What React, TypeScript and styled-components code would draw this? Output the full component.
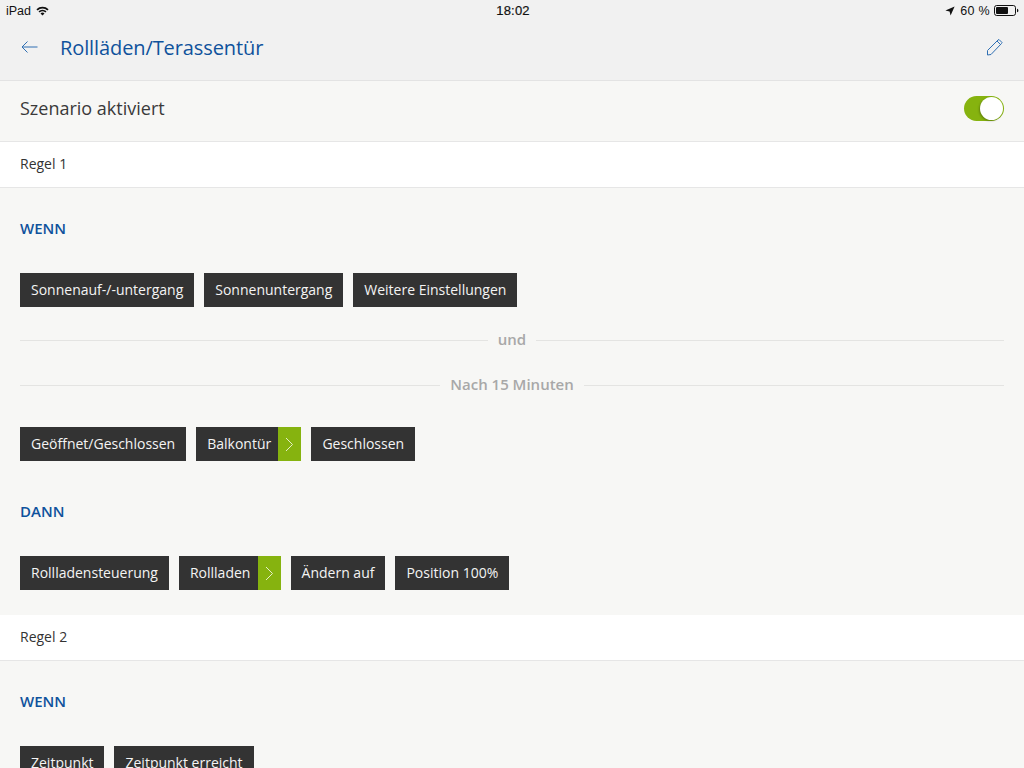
import React from 'react';
import styled, { createGlobalStyle } from 'styled-components';

const GlobalStyle = createGlobalStyle`
  html, body {
    margin: 0;
    padding: 0;
    height: 768px;
    overflow: hidden;
    background: #f7f7f5;
    font-family: 'Open Sans', 'Liberation Sans', sans-serif;
  }
`;

const Screen = styled.div`
  width: 1024px;
  height: 768px;
  overflow: hidden;
  display: flex;
  flex-direction: column;
`;

const Header = styled.header`
  height: 80px;
  flex: none;
  background: #f1f1f1;
  border-bottom: 1px solid #e3e3e3;
  display: flex;
  flex-direction: column;
`;

const StatusBar = styled.div`
  height: 21px;
  padding: 0 5px 0 6px;
  display: flex;
  align-items: center;
  justify-content: space-between;
  position: relative;
  font-family: 'Liberation Sans', sans-serif;
  font-size: 12.5px;
  color: #111;
`;

const StatusSide = styled.div`
  display: flex;
  align-items: center;
  gap: 5px;
`;

const Clock = styled.div`
  position: absolute;
  left: 2px;
  right: 0;
  text-align: center;
  font-size: 13px;
  letter-spacing: 0.2px;
  -webkit-text-stroke: 0.2px #111;
`;

const BatteryLabel = styled.span`
  letter-spacing: 0.3px;
  margin-right: -1px;
`;

const NavBar = styled.div`
  flex: 1;
  padding: 0 20px 7px;
  display: flex;
  align-items: center;
  gap: 21px;
`;

const NavTitle = styled.h1`
  flex: 1;
  margin: 0;
  font-size: 20px;
  font-weight: 400;
  letter-spacing: -0.1px;
  color: #0f529c;
`;

const ActivationRow = styled.div`
  height: 61px;
  flex: none;
  box-sizing: border-box;
  padding: 0 20px 6px;
  display: flex;
  align-items: center;
  justify-content: space-between;
  font-size: 18px;
  color: #3a3a3a;
  border-bottom: 1px solid #e6e6e6;
`;

const Toggle = styled.div`
  width: 40px;
  height: 25px;
  box-sizing: border-box;
  border-radius: 13px;
  background: #86b30f;
  position: relative;
  &::after {
    content: '';
    position: absolute;
    top: 1px;
    right: 1px;
    width: 23px;
    height: 23px;
    border-radius: 50%;
    background: #fff;
    box-shadow: -1px 1px 2px rgba(0, 0, 0, 0.25);
  }
`;

const RuleHeader = styled.div<{ $top?: number }>`
  height: 46px;
  flex: none;
  box-sizing: border-box;
  margin-top: ${(p) => p.$top ?? 0}px;
  padding: 0 20px 2px;
  display: flex;
  align-items: center;
  background: #fff;
  border-bottom: 1px solid #e6e6e6;
  font-size: 14px;
  color: #333;
`;

const RuleBody = styled.section`
  flex: none;
  padding: 0 20px;
  display: flex;
  flex-direction: column;
`;

const SectionLabel = styled.h2<{ $top: number }>`
  margin: ${(p) => p.$top}px 0 0;
  height: 22px;
  line-height: 22px;
  font-size: 15px;
  font-weight: 600;
  color: #0f529c;
`;

const ChipRow = styled.div<{ $top: number }>`
  margin-top: ${(p) => p.$top}px;
  display: flex;
  gap: 10px;
`;

const Chip = styled.div`
  height: 34px;
  display: flex;
  align-items: stretch;
  background: #333333;
  color: #f4f4f4;
  font-size: 14px;
  line-height: 34px;
`;

const ChipText = styled.span<{ $arrow?: boolean }>`
  padding: 0 ${(p) => (p.$arrow ? 7.15 : 11)}px 0 11px;
`;

const ChipArrow = styled.span`
  width: 23px;
  display: flex;
  align-items: center;
  justify-content: center;
  background: #86b30f;
`;

const Divider = styled.div<{ $top: number }>`
  margin-top: ${(p) => p.$top}px;
  height: 22px;
  display: flex;
  align-items: center;
  gap: 10px;
  font-size: 15px;
  font-weight: 600;
  color: #a8a8a8;
  &::before,
  &::after {
    content: '';
    flex: 1;
    height: 1px;
    background: #e4e4e2;
  }
`;

const DividerText = styled.span`
  margin-bottom: 2px;
`;

const Wifi = () => (
  <svg width="13" height="10" viewBox="0 0 13 10" fill="#111">
    <path d="M6.5 9.6 4.5 7.4a2.9 2.9 0 0 1 4 0z" />
    <path d="M3.6 6.5 2.5 5.3a5.9 5.9 0 0 1 8 0L9.4 6.5a4.3 4.3 0 0 0-5.8 0z" />
    <path d="M1.6 4.4.4 3.2a8.9 8.9 0 0 1 12.2 0l-1.2 1.2a7.2 7.2 0 0 0-9.8 0z" />
  </svg>
);

const LocationArrow = () => (
  <svg width="10" height="10" viewBox="0 0 10 10" fill="#111">
    <path d="M9.6.4 5.6 9.6 4.6 5.4.4 4.4z" />
  </svg>
);

const Battery = () => (
  <svg width="25" height="11" viewBox="0 0 25 11">
    <rect x="0.5" y="0.5" width="21" height="10" rx="2.2" fill="none" stroke="#111" />
    <rect x="2" y="2" width="12" height="7" rx="1" fill="#111" />
    <path d="M23 3.7c.9.2 1.4.9 1.4 1.8S23.9 7.1 23 7.3z" fill="#111" />
  </svg>
);

const BackArrow = () => (
  <svg width="19" height="14" viewBox="0 0 19 14" fill="none" stroke="#2f6fb3" strokeWidth="1">
    <path d="M17.500 7H2M7.500 1.500 2 7l5.500 5.500" />
  </svg>
);

const Pencil = () => (
  <svg width="18" height="18" viewBox="0 0 18 18" fill="none" stroke="#2f6fb3" strokeWidth="1">
    <path d="M1.500 12.500 12 2l1-.5 3 3-.5 1L5 16.500l-3.500.5z" />
    <path d="M11 3l4 4" />
  </svg>
);

const Chevron = () => (
  <svg width="9" height="15" viewBox="0 0 9 15" fill="none" stroke="#e6efc8" strokeWidth="1">
    <path d="M1 1l6.500 6.500L1 14" />
  </svg>
);

const Tag: React.FC<{ label: string; arrow?: boolean }> = ({ label, arrow }) => (
  <Chip>
    <ChipText $arrow={arrow}>{label}</ChipText>
    {arrow && (
      <ChipArrow>
        <Chevron />
      </ChipArrow>
    )}
  </Chip>
);

const App: React.FC = () => (
  <Screen>
    <GlobalStyle />
    <Header>
      <StatusBar>
        <StatusSide>
          <span>iPad</span>
          <Wifi />
        </StatusSide>
        <Clock>18:02</Clock>
        <StatusSide>
          <LocationArrow />
          <BatteryLabel>60 %</BatteryLabel>
          <Battery />
        </StatusSide>
      </StatusBar>
      <NavBar>
        <BackArrow />
        <NavTitle>Rollläden/Terassentür</NavTitle>
        <Pencil />
      </NavBar>
    </Header>
    <ActivationRow>
      Szenario aktiviert
      <Toggle />
    </ActivationRow>
    <RuleHeader>Regel 1</RuleHeader>
    <RuleBody>
      <SectionLabel $top={29}>WENN</SectionLabel>
      <ChipRow $top={34}>
        <Tag label="Sonnenauf-/-untergang" />
        <Tag label="Sonnenuntergang" />
        <Tag label="Weitere Einstellungen" />
      </ChipRow>
      <Divider $top={22}>
        <DividerText>und</DividerText>
      </Divider>
      <Divider $top={23}>
        <DividerText>Nach 15 Minuten</DividerText>
      </Divider>
      <ChipRow $top={31}>
        <Tag label="Geöffnet/Geschlossen" />
        <Tag label="Balkontür" arrow />
        <Tag label="Geschlossen" />
      </ChipRow>
      <SectionLabel $top={39}>DANN</SectionLabel>
      <ChipRow $top={34}>
        <Tag label="Rollladensteuerung" />
        <Tag label="Rollladen" arrow />
        <Tag label="Ändern auf" />
        <Tag label="Position 100%" />
      </ChipRow>
    </RuleBody>
    <RuleHeader $top={25}>Regel 2</RuleHeader>
    <RuleBody>
      <SectionLabel $top={29}>WENN</SectionLabel>
      <ChipRow $top={34}>
        <Tag label="Zeitpunkt" />
        <Tag label="Zeitpunkt erreicht" />
      </ChipRow>
    </RuleBody>
  </Screen>
);

export default App;
